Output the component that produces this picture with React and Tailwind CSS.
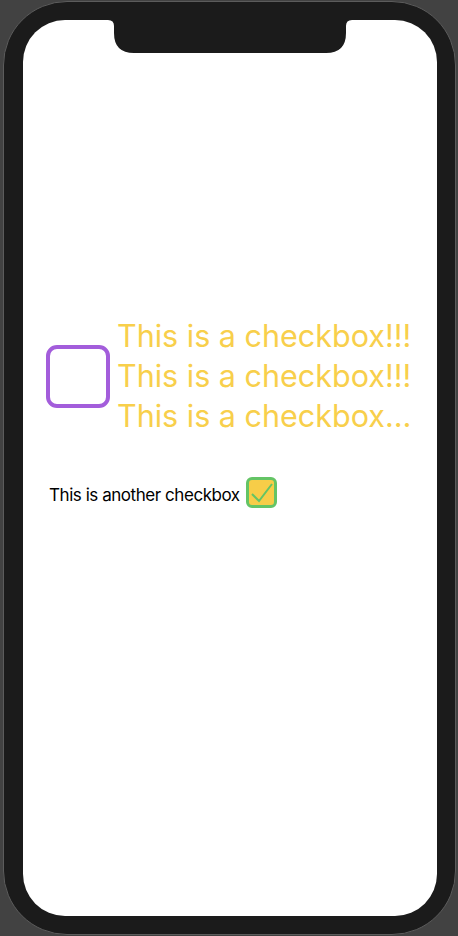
export default function App() {
  return (
    <div className="w-[458px] h-[936px] bg-[#424242] overflow-hidden">
      <div className="ml-[3px] mt-[1px] w-[453px] h-[934px] rounded-[64px] bg-[#1b1b1b] border border-[#5c5c5c] pt-[18px] pl-[19px]">
        <div className="relative w-[414px] h-[896px] bg-white rounded-[42px] overflow-hidden" style={{ fontFamily: "Inter, 'Noto Sans', sans-serif" }}>
          <svg className="absolute top-0 left-[85px]" width="244" height="34" viewBox="0 0 244 34">
            <path d="M0 0 H244 Q238 0 238 6 V13 Q238 33 218 33 H26 Q6 33 6 13 V6 Q6 0 0 0 Z" fill="#1b1b1b" />
          </svg>
          <div className="pt-[296px] flex flex-col">
            <div className="flex items-center pl-[23px]">
              <div className="w-[64px] h-[63px] rounded-[11px] border-[4px] border-[#a35ddb] shrink-0" />
              <div className="ml-[7px] text-[30.5px] leading-[40px] text-[#f8cf4b] whitespace-nowrap">
                <div>This is a checkbox!!!</div>
                <div>This is a checkbox!!!</div>
                <div>This is a checkbox…</div>
              </div>
            </div>
            <div className="flex items-start pl-[26px] mt-[41px]">
              <span className="mt-[3px] text-[17px] leading-[30px] tracking-[-0.45px] text-black">This is another checkbox</span>
              <div className="ml-[6px] w-[31px] h-[31px] rounded-[6px] border-[3px] border-[#64c465] bg-[#f7cd48] flex items-center justify-center">
                <svg width="25" height="25" viewBox="0 0 25 25">
                  <path d="M3 14 L10 21 L23 4" fill="none" stroke="#64c465" strokeWidth="2" />
                </svg>
              </div>
            </div>
          </div>
        </div>
      </div>
    </div>
  );
}
